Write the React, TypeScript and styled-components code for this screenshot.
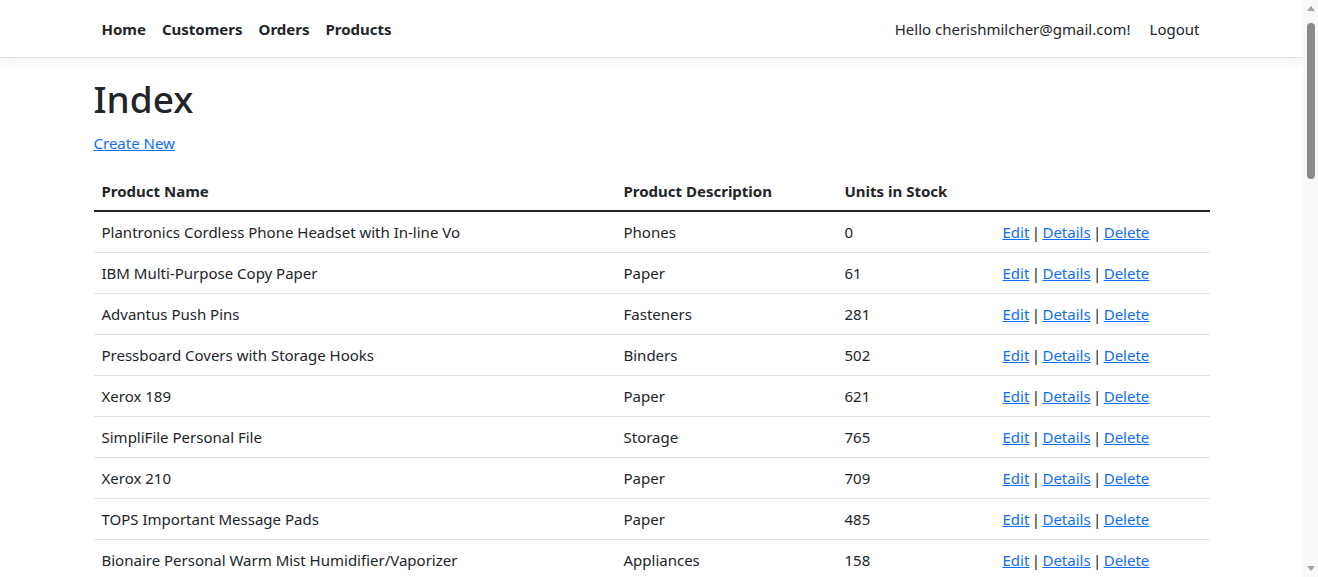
import React from "react";
import styled, { createGlobalStyle } from "styled-components";

const GlobalStyle = createGlobalStyle`
  *, *::before, *::after { box-sizing: border-box; }
  html, body { height: 100%; overflow: hidden; }
  body {
    margin: 0;
    font-family: "Noto Sans", "Open Sans", sans-serif;
    font-size: 15px;
    line-height: 24px;
    color: #212529;
    background: #fff;
  }
  #root { height: 100%; }
`;

const Shell = styled.div`
  display: flex;
  height: 100vh;
`;

const Viewport = styled.div`
  flex: 1;
  min-width: 0;
  overflow-y: auto;
  scrollbar-width: none;
  &::-webkit-scrollbar { display: none; }
`;

const ScrollTrack = styled.div`
  width: 15px;
  flex-shrink: 0;
  background: #f9f9f9;
  display: flex;
  flex-direction: column;
  align-items: center;
`;

const ArrowBox = styled.div`
  height: 17px;
  width: 100%;
  display: flex;
  align-items: center;
  justify-content: center;
`;

const Thumb = styled.div<{ $size: number }>`
  width: 8px;
  height: ${(p) => p.$size}px;
  margin-top: 6px;
  border-radius: 4px;
  background: #8b8b8b;
`;

const TrackFill = styled.div`
  flex: 1;
`;

const Navbar = styled.header`
  background: #fff;
  border-bottom: 1px solid #dee2e6;
  box-shadow: 0 4px 12px rgba(0, 0, 0, 0.05);
  padding: 9px 0 8px;
  margin-bottom: 17px;
`;

const Container = styled.div`
  max-width: 1140px;
  margin: 0 auto;
  padding: 0 12px;
`;

const NavInner = styled(Container)`
  display: flex;
  align-items: center;
  justify-content: space-between;
`;

const NavList = styled.nav`
  display: flex;
  align-items: center;
`;

const NavLink = styled.a`
  display: block;
  padding: 8px;
  color: #212529;
  font-weight: 700;
  text-decoration: none;
`;

const NavText = styled.span`
  padding: 8px 9px 8px 8px;
  color: #212529;
`;

const LogoutButton = styled.button`
  font: inherit;
  color: #212529;
  background: none;
  border: 0;
  padding: 8px 10px;
  cursor: pointer;
`;

const Title = styled.h1`
  font-size: 37px;
  font-weight: 500;
  line-height: 48px;
  margin: 0 0 8px;
`;

const Para = styled.p`
  margin: 0 0 16px;
`;

const Link = styled.a`
  color: #0d6efd;
  text-decoration: underline;
`;

const Table = styled.table`
  width: 100%;
  border-collapse: collapse;
  table-layout: fixed;
  margin-bottom: 16px;
`;

const Th = styled.th`
  text-align: left;
  font-weight: 700;
  padding: 8px 8px 7px;
  border-bottom: 2px solid #212529;
`;

const Td = styled.td<{ $actions?: boolean }>`
  padding: 8px;
  border-bottom: 1px solid #dee2e6;
  white-space: nowrap;
  overflow: hidden;
  word-spacing: ${(p) => (p.$actions ? "-1.5px" : "normal")};
`;

const rows: [string, string, number][] = [
  ["Plantronics Cordless Phone Headset with In-line Vo", "Phones", 0],
  ["IBM Multi-Purpose Copy Paper", "Paper", 61],
  ["Advantus Push Pins", "Fasteners", 281],
  ["Pressboard Covers with Storage Hooks", "Binders", 502],
  ["Xerox 189", "Paper", 621],
  ["SimpliFile Personal File", "Storage", 765],
  ["Xerox 210", "Paper", 709],
  ["TOPS Important Message Pads", "Paper", 485],
  ["Bionaire Personal Warm Mist Humidifier/Vaporizer", "Appliances", 158],
];

const Arrow = ({ up }: { up?: boolean }) => (
  <svg width="8" height="5" viewBox="0 0 8 5">
    <path d={up ? "M0 5 L4 0 L8 5 Z" : "M0 0 L4 5 L8 0 Z"} fill="#a3a3a3" />
  </svg>
);

export default function App() {
  return (
    <Shell>
      <GlobalStyle />
      <Viewport>
        <Navbar>
          <NavInner>
            <NavList>
              <NavLink href="#">Home</NavLink>
              <NavLink href="#">Customers</NavLink>
              <NavLink href="#">Orders</NavLink>
              <NavLink href="#">Products</NavLink>
            </NavList>
            <NavList>
              <NavText>Hello cherishmilcher@gmail.com!</NavText>
              <LogoutButton type="button">Logout</LogoutButton>
            </NavList>
          </NavInner>
        </Navbar>
        <Container as="main">
          <Title>Index</Title>
          <Para>
            <Link href="#">Create New</Link>
          </Para>
          <Table>
            <colgroup>
              <col style={{ width: 522 }} />
              <col style={{ width: 221 }} />
              <col style={{ width: 158 }} />
              <col />
            </colgroup>
            <thead>
              <tr>
                <Th>Product Name</Th>
                <Th>Product Description</Th>
                <Th>Units in Stock</Th>
                <Th></Th>
              </tr>
            </thead>
            <tbody>
              {rows.map(([name, desc, units]) => (
                <tr key={name}>
                  <Td>{name}</Td>
                  <Td>{desc}</Td>
                  <Td>{units}</Td>
                  <Td $actions>
                    <Link href="#">Edit</Link>
                    {" | "}
                    <Link href="#">Details</Link>
                    {" | "}
                    <Link href="#">Delete</Link>
                  </Td>
                </tr>
              ))}
            </tbody>
          </Table>
        </Container>
      </Viewport>
      <ScrollTrack aria-hidden="true">
        <ArrowBox>
          <Arrow up />
        </ArrowBox>
        <Thumb $size={156} />
        <TrackFill />
        <ArrowBox>
          <Arrow />
        </ArrowBox>
      </ScrollTrack>
    </Shell>
  );
}
